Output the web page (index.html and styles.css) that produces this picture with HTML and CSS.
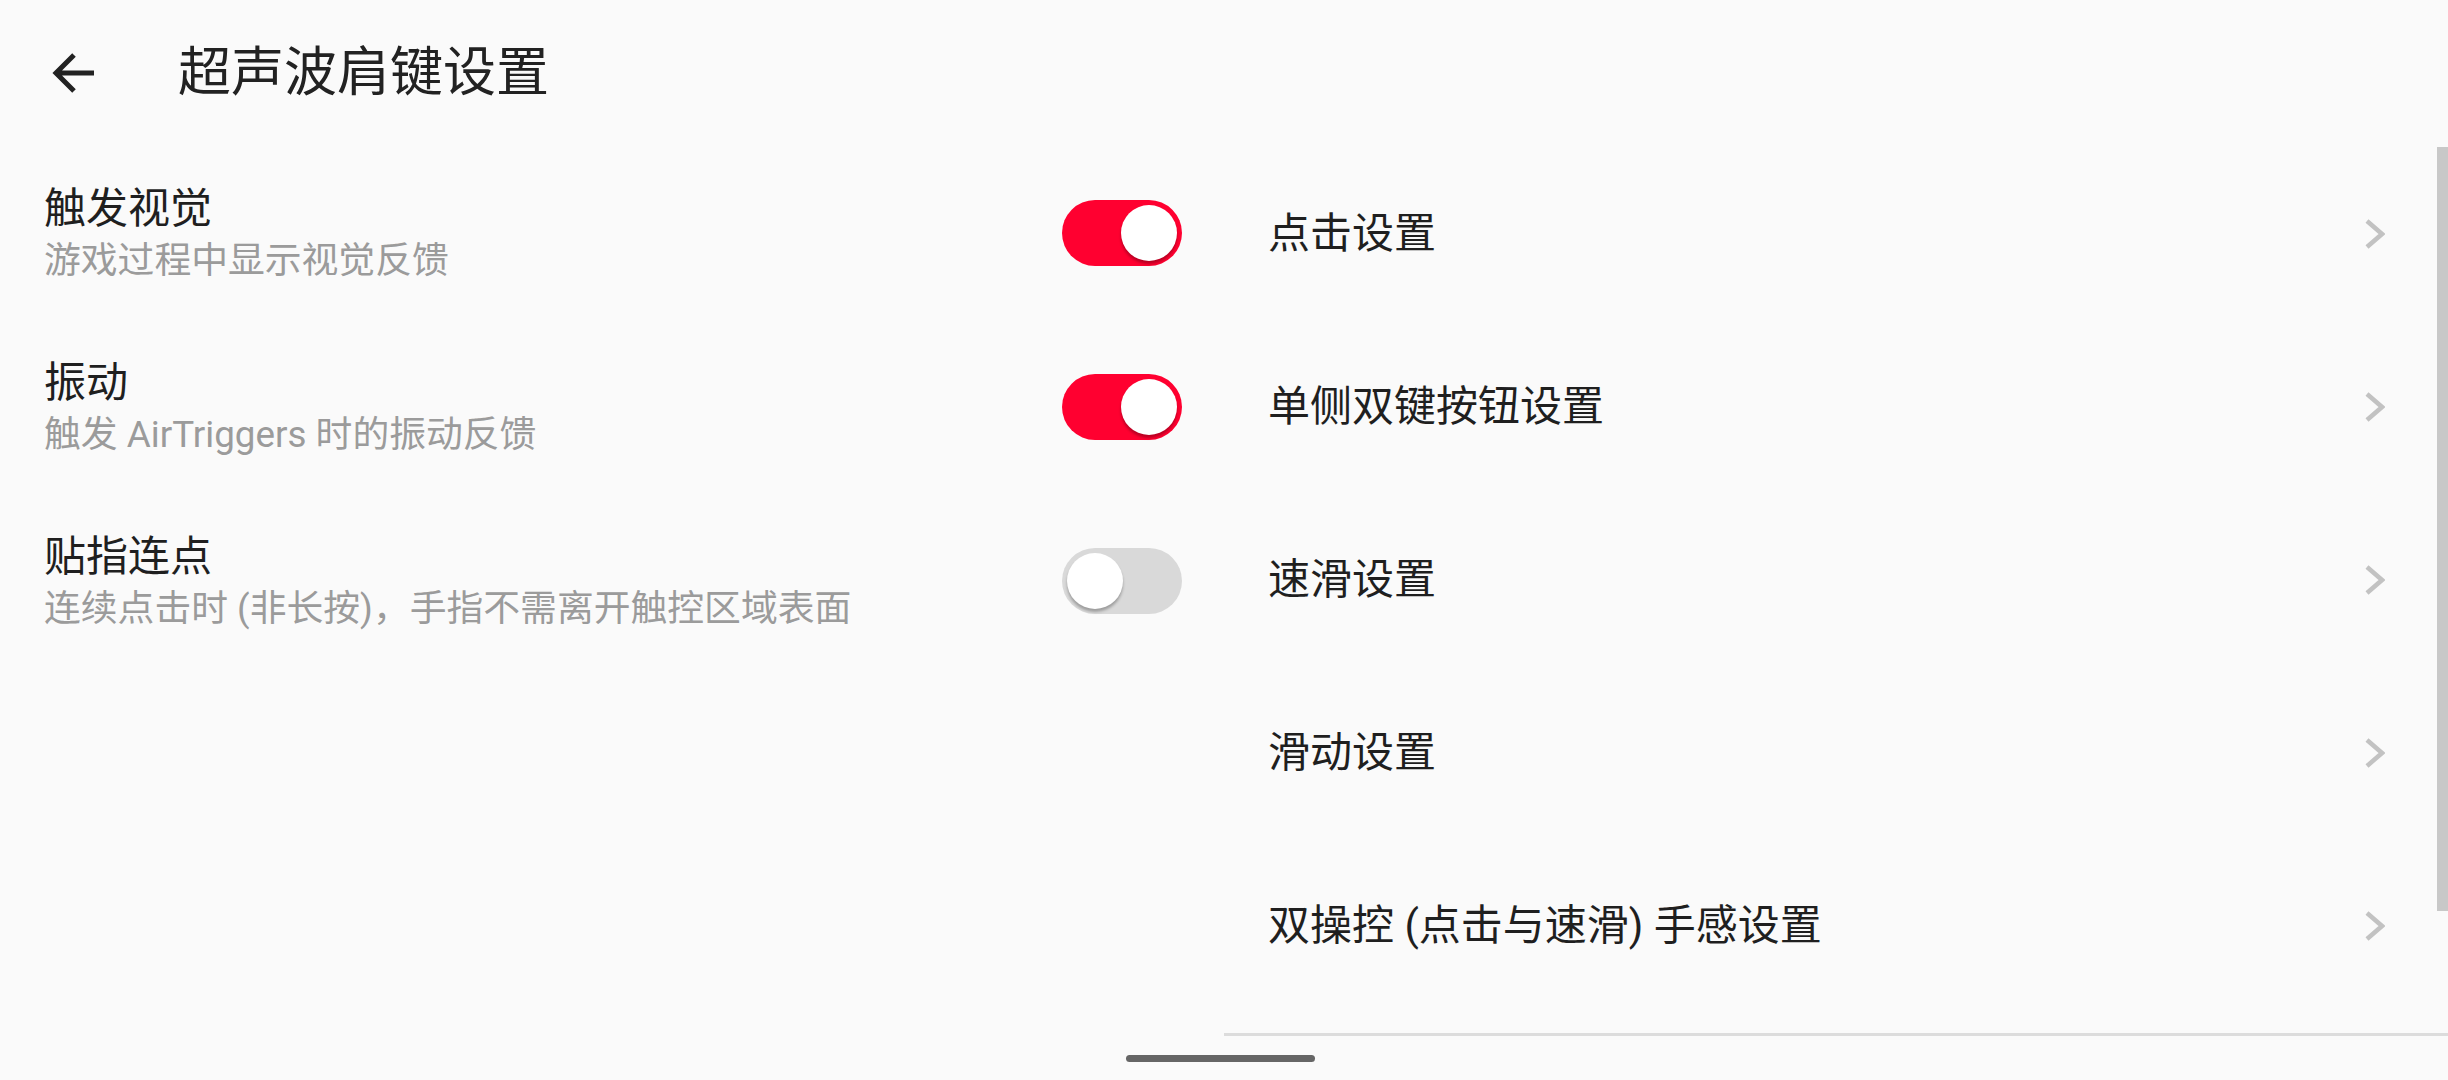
FILE: index.html
```html
<!DOCTYPE html>
<html lang="zh-CN">
<head>
<meta charset="utf-8">
<title>超声波肩键设置</title>
<link rel="stylesheet" href="styles.css">
</head>
<body>
<div class="screen">
  <header class="header">
    <svg class="back" width="44" height="42" viewBox="0 0 44 42">
      <path d="M42 21 H5 M22 3 L4 21 L22 39" fill="none" stroke="#222" stroke-width="5"/>
    </svg>
    <h1 class="page-title">超声波肩键设置</h1>
  </header>
  <main class="main">
    <section class="left">
      <div class="switch-row">
        <div class="texts">
          <div class="row-title">触发视觉</div>
          <div class="row-sub">游戏过程中显示视觉反馈</div>
        </div>
        <div class="toggle on"><span class="thumb"></span></div>
      </div>
      <div class="switch-row">
        <div class="texts">
          <div class="row-title">振动</div>
          <div class="row-sub">触发 AirTriggers 时的振动反馈</div>
        </div>
        <div class="toggle on"><span class="thumb"></span></div>
      </div>
      <div class="switch-row">
        <div class="texts">
          <div class="row-title">贴指连点</div>
          <div class="row-sub">连续点击时 (非长按)，手指不需离开触控区域表面</div>
        </div>
        <div class="toggle"><span class="thumb"></span></div>
      </div>
    </section>
    <section class="right">
      <div class="nav-row"><span class="row-title">点击设置</span><svg class="chev" width="20" height="30" viewBox="0 0 20 30"><polyline points="2,2 17,15 2,28" fill="none" stroke="#c2c2c2" stroke-width="4.5"/></svg></div>
      <div class="nav-row"><span class="row-title">单侧双键按钮设置</span><svg class="chev" width="20" height="30" viewBox="0 0 20 30"><polyline points="2,2 17,15 2,28" fill="none" stroke="#c2c2c2" stroke-width="4.5"/></svg></div>
      <div class="nav-row"><span class="row-title">速滑设置</span><svg class="chev" width="20" height="30" viewBox="0 0 20 30"><polyline points="2,2 17,15 2,28" fill="none" stroke="#c2c2c2" stroke-width="4.5"/></svg></div>
      <div class="nav-row"><span class="row-title">滑动设置</span><svg class="chev" width="20" height="30" viewBox="0 0 20 30"><polyline points="2,2 17,15 2,28" fill="none" stroke="#c2c2c2" stroke-width="4.5"/></svg></div>
      <div class="nav-row"><span class="row-title">双操控 (点击与速滑) 手感设置</span><svg class="chev" width="20" height="30" viewBox="0 0 20 30"><polyline points="2,2 17,15 2,28" fill="none" stroke="#c2c2c2" stroke-width="4.5"/></svg></div>
      <div class="divider"></div>
      <div class="scrollbar"></div>
    </section>
  </main>
  <div class="gesture-bar"></div>
</div>
</body>
</html>
```
FILE: styles.css
```css
html, body {
  margin: 0;
  padding: 0;
  background: #fafafa;
}
body {
  font-family: Roboto, "Noto Sans CJK SC", sans-serif;
  color: #212121;
}
.screen {
  position: relative;
  width: 2448px;
  height: 1080px;
  overflow: hidden;
  background: #fafafa;
}
.header {
  height: 146px;
  display: flex;
  align-items: center;
  padding-left: 52px;
  box-sizing: border-box;
}
.back {
  display: block;
  flex: none;
}
.page-title {
  margin: 0 0 0 82px;
  font-size: 53px;
  font-weight: 400;
  line-height: 60px;
  color: #222;
}
.main {
  display: grid;
  grid-template-columns: 1224px 1224px;
}
.left {
  padding: 0 42px 0 44px;
}
.switch-row {
  height: 174px;
  display: flex;
  align-items: center;
  justify-content: space-between;
}
.texts {
  display: flex;
  flex-direction: column;
}
.row-title {
  font-size: 42px;
  line-height: 56px;
  color: #1f1f1f;
}
.row-sub {
  font-size: 36.8px;
  line-height: 48px;
  color: #9b9b9b;
}
.toggle {
  width: 120px;
  height: 66px;
  border-radius: 33px;
  background: #d9d9d9;
  box-sizing: border-box;
  padding: 5px;
  display: flex;
  justify-content: flex-start;
  flex: none;
}
.toggle.on {
  background: #ff0030;
  justify-content: flex-end;
}
.thumb {
  width: 56px;
  height: 56px;
  border-radius: 50%;
  background: #fff;
  box-shadow: 0 3px 3px rgba(0, 0, 0, 0.28);
}
.right {
  position: relative;
  padding-top: 1px;
}
.nav-row {
  height: 173px;
  display: flex;
  align-items: center;
  justify-content: space-between;
  padding: 0 63px 0 44px;
}
.chev {
  display: block;
  flex: none;
}
.divider {
  margin-top: 21px;
  height: 3px;
  background: #dcdcdc;
}
.scrollbar {
  position: absolute;
  right: 0;
  top: 1px;
  width: 11px;
  height: 764px;
  background: #c8c8c8;
}
.gesture-bar {
  position: absolute;
  left: 1126px;
  top: 1055px;
  width: 189px;
  height: 7px;
  border-radius: 4px;
  background: #666;
}
```
